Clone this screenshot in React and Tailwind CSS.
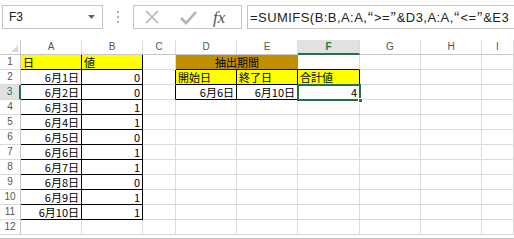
import React from 'react';

const COLS = [
  { key: 'A', w: 'w-[61px]' },
  { key: 'B', w: 'w-[61px]' },
  { key: 'C', w: 'w-[33px]' },
  { key: 'D', w: 'w-[61px]' },
  { key: 'E', w: 'w-[61px]' },
  { key: 'F', w: 'w-[62px]' },
  { key: 'G', w: 'w-[61px]' },
  { key: 'H', w: 'w-[61px]' },
  { key: 'I', w: 'w-[32px]' },
];

const dates = ['6月1日', '6月2日', '6月3日', '6月4日', '6月5日', '6月6日', '6月7日', '6月8日', '6月9日', '6月10日'];
const vals = [0, 0, 1, 1, 0, 1, 1, 0, 1, 1];

// cell content keyed by "r,c" (r = 1-based row, c = column index)
const cells = {};
cells['1,0'] = { text: '日', bg: 'bg-[#ffff00]', align: 'left' };
cells['1,1'] = { text: '値', bg: 'bg-[#ffff00]', align: 'left' };
dates.forEach((d, i) => {
  cells[`${i + 2},0`] = { text: d, align: 'right' };
  cells[`${i + 2},1`] = { text: String(vals[i]), align: 'right' };
});
cells['2,3'] = { text: '開始日', bg: 'bg-[#ffff00]', align: 'left' };
cells['2,4'] = { text: '終了日', bg: 'bg-[#ffff00]', align: 'left' };
cells['2,5'] = { text: '合計値', bg: 'bg-[#ffff00]', align: 'left' };
cells['3,3'] = { text: '6月6日', align: 'right' };
cells['3,4'] = { text: '6月10日', align: 'right' };
cells['3,5'] = { text: '4', align: 'right' };

function boxed(r, c) {
  if (c <= 1 && r >= 1 && r <= 11) return true;
  if (c >= 3 && c <= 5 && r >= 2 && r <= 3) return true;
  return false;
}

function Cell({ r, c }) {
  const col = COLS[c];
  const info = cells[`${r},${c}`];
  const blackRight = boxed(r, c) || boxed(r, c + 1);
  const blackBottom = boxed(r, c) || boxed(r + 1, c);
  return (
    <div
      className={`${col.w} h-full shrink-0 flex items-center px-[2px] border-r border-b ${
        blackRight ? 'border-r-black' : 'border-r-[#dadada]'
      } ${blackBottom ? 'border-b-black' : 'border-b-[#dadada]'} ${info?.bg || 'bg-white'} ${
        info?.align === 'right' ? 'justify-end' : 'justify-start'
      }`}
    >
      {info && <span className="text-[11px] leading-none text-black whitespace-nowrap">{info.text}</span>}
    </div>
  );
}

function RowHeader({ n, active }) {
  return (
    <div
      className={`w-[21px] h-full shrink-0 flex items-center justify-center border-b ${
        active ? 'bg-[#e1e1e1] text-[#217346] border-r-2 border-r-[#217346]' : 'bg-white text-[#555] border-r border-r-[#c6c6c6]'
      } border-b-[#dadada]`}
    >
      <span className="text-[10px] leading-none font-['Liberation_Sans',sans-serif]">{n}</span>
    </div>
  );
}

function Row({ r }) {
  if (r === 1) {
    return (
      <div className="flex h-[15px]">
        <RowHeader n={1} />
        <Cell r={1} c={0} />
        <Cell r={1} c={1} />
        <Cell r={1} c={2} />
        <div className="w-[122px] h-full shrink-0 flex items-center justify-center bg-[#bf8f00] border-b border-b-black">
          <span className="text-[11px] leading-none text-black">抽出期間</span>
        </div>
        <Cell r={1} c={5} />
        <Cell r={1} c={6} />
        <Cell r={1} c={7} />
        <Cell r={1} c={8} />
      </div>
    );
  }
  return (
    <div className="flex h-[15px]">
      <RowHeader n={r} active={r === 3} />
      {COLS.map((_, c) => (
        <Cell key={c} r={r} c={c} />
      ))}
    </div>
  );
}

function FormulaBar() {
  return (
    <div className="h-[40px] flex items-start pt-[5px] bg-white">
      <div className="ml-[2px] w-[101px] h-[24px] border border-[#c6c6c6] flex items-center justify-between pl-[6px] pr-[7px]">
        <span className="text-[12px] text-[#222] font-['Liberation_Sans',sans-serif]">F3</span>
        <svg width="7" height="4" viewBox="0 0 7 4"><path d="M0 0h7L3.5 4z" fill="#666" /></svg>
      </div>
      <div className="w-[30px] h-[24px] flex flex-col items-center justify-center gap-[3px]">
        <span className="w-[2px] h-[2px] bg-[#b0b0b0]" />
        <span className="w-[2px] h-[2px] bg-[#b0b0b0]" />
        <span className="w-[2px] h-[2px] bg-[#b0b0b0]" />
      </div>
      <div className="w-[109px] h-[24px] border border-[#c6c6c6] flex items-center">
        <svg className="ml-[10px]" width="16" height="16" viewBox="0 0 16 16">
          <path d="M2 2L14 14M14 2L2 14" stroke="#b4b4b4" strokeWidth="1.6" />
        </svg>
        <svg className="ml-[20px]" width="17" height="15" viewBox="0 0 17 15">
          <path d="M1 8l5 5L16 2" stroke="#b4b4b4" strokeWidth="2.6" fill="none" />
        </svg>
        <span className="ml-[16px] text-[17px] leading-none italic text-[#555] font-['Liberation_Serif',serif]">fx</span>
      </div>
      <div className="ml-[5px] flex-1 h-[24px] border-t border-b border-l border-[#c6c6c6] flex items-center pl-[2px] overflow-hidden">
        <span className="text-[13px] leading-none text-[#222] whitespace-nowrap font-['Liberation_Sans',sans-serif] tracking-[0.45px]">
          =SUMIFS(B:B,A:A,<span className="font-['Noto_Sans_CJK_JP']">“</span>&gt;=<span className="font-['Noto_Sans_CJK_JP']">”</span>&amp;D3,A:A,<span className="font-['Noto_Sans_CJK_JP']">“</span>&lt;=<span className="font-['Noto_Sans_CJK_JP']">”</span>&amp;E3
        </span>
      </div>
    </div>
  );
}

function ColumnHeaders() {
  return (
    <div className="flex h-[15px]">
      <div className="w-[21px] h-full shrink-0 bg-white border-r border-b border-[#c6c6c6] flex items-end justify-end p-[2px]">
        <svg width="7" height="7" viewBox="0 0 7 7"><path d="M7 0V7H0z" fill="#d6d6d6" /></svg>
      </div>
      {COLS.map((col) => {
        const active = col.key === 'F';
        return (
          <div
            key={col.key}
            className={`${col.w} h-full shrink-0 flex items-center justify-center border-r ${
              active ? 'bg-[#e1e1e1] text-[#217346] border-b-2 border-b-[#217346] font-bold' : 'bg-white text-[#555] border-b border-b-[#c6c6c6]'
            } border-r-[#dadada]`}
          >
            <span className="text-[10px] leading-none font-['Liberation_Sans',sans-serif]">{col.key}</span>
          </div>
        );
      })}
    </div>
  );
}

export default function App() {
  return (
    <div className="relative w-[514px] h-[239px] overflow-hidden bg-white font-['Noto_Sans_CJK_JP','Noto_Sans',sans-serif]">
      <FormulaBar />
      <ColumnHeaders />
      {Array.from({ length: 12 }, (_, i) => (
        <Row key={i} r={i + 1} />
      ))}
      <div className="h-[4px] border-b border-[#c6c6c6] bg-white" />
      {/* active cell selection F3 */}
      <div className="absolute left-[297px] top-[84px] w-[64px] h-[17px] border-2 border-[#217346] pointer-events-none" />
      <div className="absolute left-[358px] top-[98px] w-[5px] h-[5px] bg-[#217346] border border-white" />
    </div>
  );
}
